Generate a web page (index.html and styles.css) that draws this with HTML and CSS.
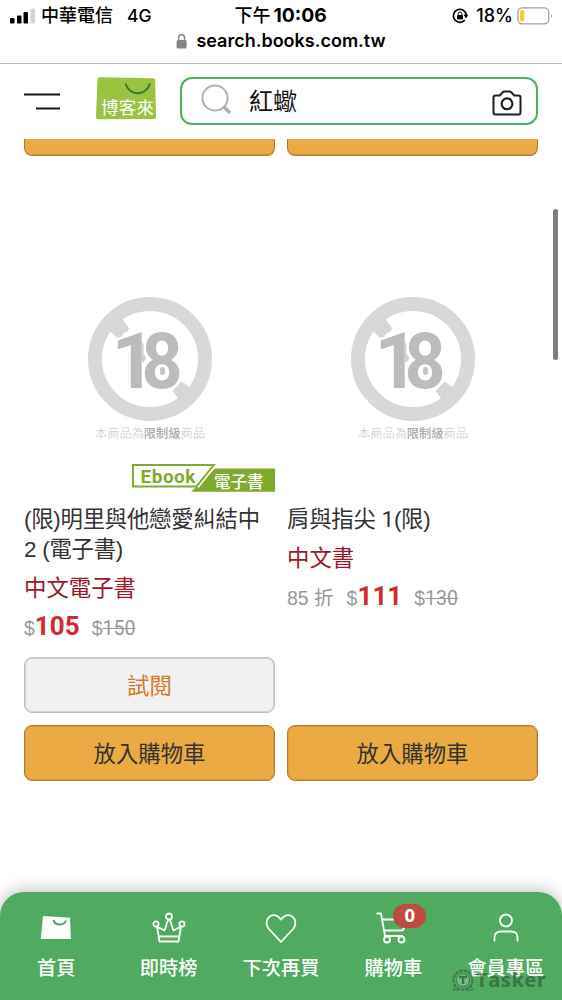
FILE: index.html
```html
<!DOCTYPE html>
<html lang="zh-Hant">
<head>
<meta charset="utf-8">
<meta name="viewport" content="width=device-width">
<title>search.books.com.tw</title>
<link rel="stylesheet" href="styles.css">
</head>
<body>
<svg class="defs" width="0" height="0">
  <symbol id="restricted" viewBox="0 0 150 160">
    <circle cx="70" cy="74" r="55" fill="none" stroke="#d8d8d8" stroke-width="14"/>
    <path d="m29 45 12-13 8 11-1 3-4 2-4 5-3 0zM92.500 106l9-9.500 10 7-11 13z" fill="#d6d6d6"/>
    <text class="restricted-num" transform="translate(31.500 103) scale(1 1)">1</text>
    <text class="restricted-num" transform="translate(61.500 103) scale(.93 1)">8</text>
    <path d="m61 56 2.500 3v10l3 4-3.500 5-2-4z" fill="#d0d0d0"/>
    <rect x="80" y="82" width="5" height="8" rx="2" fill="#c6c6c6"/>
    <text class="restricted-note" x="15" y="152.500" textLength="110">本商品為<tspan fill="#aaa" font-weight="500">限制級</tspan>商品</text>
  </symbol>
</svg>

<div class="status">
  <div class="status-row">
    <div class="carrier">
      <svg width="26" height="16" viewBox="0 0 26 16"><rect x="0" y="10" width="4.500" height="5.500" rx="1.200"/><rect x="7" y="7.500" width="4.500" height="8" rx="1.200"/><rect x="13.500" y="4" width="4.500" height="11.500" rx="1.200"/><rect x="20.500" y=".5" width="4.500" height="15" rx="1.200" fill="#d2d2d2"/></svg>
      <span>中華電信</span><span class="network">4G</span>
    </div>
    <div class="clock">下午<b>10:06</b></div>
    <div class="battery">
      <svg width="17" height="16" viewBox="0 0 17 16"><path d="M12.800 12A6.500 6.500 0 1 1 14.300 7" fill="none" stroke="#000" stroke-width="1.700"/><path d="m11.500 6.500 5 .3-2.600 3.700z"/><rect x="5" y="7" width="6" height="4.500" rx=".7"/><path d="M6.200 7V5.700a1.800 1.800 0 0 1 3.600 0V7" fill="none" stroke="#000"/></svg>
      <span>18%</span>
      <svg width="37" height="18" viewBox="0 0 37 18"><rect x=".8" y=".8" width="31" height="16" rx="4.500" fill="#fff" stroke="#a2a2a2" stroke-width="1.300"/><rect x="3" y="3" width="4.300" height="11.500" rx="1.800" fill="#f6cd38"/><path d="M34 6.500q2 2.300 0 4.600z" fill="#a2a2a2"/></svg>
    </div>
  </div>
  <div class="address">
    <svg width="12" height="15" viewBox="0 0 12 15"><rect x=".6" y="6" width="10" height="8.500" rx="1.500" fill="#858585"/><path d="M2.700 7V3.700a2.900 2.900 0 0 1 5.800 0V7" fill="none" stroke="#858585" stroke-width="1.400"/></svg>
    <span>search.books.com.tw</span>
  </div>
</div>

<header class="header">
  <svg class="menu" width="36" height="17" viewBox="0 0 36 17"><path d="M0 1.500h36M12 15.500h24" stroke="#161616" stroke-width="2"/></svg>
  <svg class="logo" width="60" height="43" viewBox="0 0 60 43"><path d="M3.500.2 57 1.200q2 0 2.200 2L60 40q0 2-2 2L2 42.300q-2 0-2-2L1.500 2Q1.600.2 3.500.2z" fill="#9ac341"/><path d="M29.500 6.500c3.500 13 21 13 24.500 0" fill="none" stroke="#277c35" stroke-width="1.900"/><text class="logo-text" x="5" y="37.300" textLength="53">博客來</text></svg>
  <div class="search">
    <svg width="32" height="32" viewBox="0 0 32 32"><circle cx="14" cy="14" r="12.600" fill="none" stroke="#b0b0b0" stroke-width="2"/><path d="m22.500 22.500 6.500 6.500" stroke="#b0b0b0" stroke-width="3.300"/></svg>
    <span class="query">紅蠍</span>
    <svg width="30" height="26" viewBox="0 0 30 26"><path d="M3.500 5.500h4.200l2.800-3q.8-.9 2-.9h5q1.200 0 2 .9l2.800 3h4.200q2 0 2 2v15q0 2-2 2h-23q-2 0-2-2v-15q0-2 2-2z" fill="none" stroke="#202020" stroke-width="2"/><circle cx="15" cy="13.800" r="5.400" fill="none" stroke="#202020" stroke-width="2.200"/></svg>
  </div>
</header>

<main class="results">
  <div class="previous"><div class="button-end"></div><div class="button-end"></div></div>
  <div class="products">
    <article class="card">
      <svg class="cover" width="150" height="160"><use href="#restricted"/></svg>
      <svg class="ebook" width="143" height="28" viewBox="0 0 143 28"><path d="M83 4.500H143V27.700H59z" fill="#80aa2d"/><path d="M1 1h81L64.500 22.500H1z" fill="#fff" stroke="#80aa2d" stroke-width="2"/><path d="m84 1-18 22.500" stroke="#fff" stroke-width="1.500"/><text class="ebook-en" x="8.500" y="18.500" textLength="55">Ebook</text><text class="ebook-zh" x="82" y="23.500" textLength="49.500">電子書</text></svg>
      <h2 class="title">(限)明里與他戀愛糾結中<br>2 (電子書)</h2>
      <p class="kind">中文電子書</p>
      <p class="price"><span>$</span><strong>105</strong><span class="old">$<s>150</s></span></p>
      <div class="actions"><a class="button preview">試閱</a><a class="button buy">放入購物車</a></div>
    </article>
    <article class="card">
      <svg class="cover" width="150" height="160"><use href="#restricted"/></svg>
      <div class="ebook-space"></div>
      <h2 class="title">肩與指尖 <span class="volume">1</span>(限)</h2>
      <p class="kind">中文書</p>
      <p class="price"><span class="discount">85 折</span><span>$</span><strong>111</strong><span class="old">$<s>130</s></span></p>
      <div class="actions"><a class="button buy">放入購物車</a></div>
    </article>
  </div>
</main>
<div class="scrollbar"></div>

<nav class="nav">
  <a><svg width="36" height="34" viewBox="0 0 36 34"><path d="m5 7 27 1.700.9 21.300H2.800z" fill="#fff"/><path d="M15.500 11c1.500 6 10.500 6 12.500.5" fill="none" stroke="#50aa5f" stroke-width="2"/></svg><span>首頁</span></a>
  <a><svg class="line" width="36" height="34" viewBox="0 0 36 34"><path d="M17.200 10.500l-3.700 11-7.500-4 2.500 15H27.500l2.500-15-7.500 4-3.700-11M8 27.500h20"/><circle cx="18" cy="7.500" r="3"/><circle cx="5" cy="15" r="2.600"/><circle cx="31" cy="15" r="2.600"/></svg><span>即時榜</span></a>
  <a><svg class="line" width="36" height="34" viewBox="0 0 36 34"><path d="M18 33 5.500 19.500C2.500 16 3.200 10.500 6.500 7.600c3.800-3 9-1.400 11.500 3 2.500-4.400 7.700-6 11.500-3 3.300 2.900 4 8.400 1 11.900z"/></svg><span>下次再買</span></a>
  <a><svg class="line" width="36" height="34" viewBox="0 0 36 34"><path d="M1.500 4.500h4.500L10 27h18M7.500 10.500h22.500l-1.300 9q-.3 2-2.200 2H9.500"/><circle cx="12" cy="30.500" r="3"/><circle cx="26.500" cy="30.500" r="3"/></svg><span>購物車</span><b class="badge">0</b></a>
  <a><svg class="line" width="36" height="34" viewBox="0 0 36 34"><circle cx="18" cy="11.500" r="6"/><path d="M6.500 32.500v-4q0-6 6.500-6h10q6.500 0 6.500 6v4"/></svg><span>會員專區</span></a>
  <div class="watermark">
    <svg width="22" height="24" viewBox="0 0 22 24"><circle cx="11" cy="12" r="9.500" fill="none" stroke="#2f4e36" stroke-width="2" stroke-dasharray="3.500 1"/><circle cx="11" cy="12" r="6.500" fill="#9acba2" stroke="#2f4e36"/><path d="M7 9h8M11 9v7" stroke="#2f4e36" stroke-width="2.500"/><path d="m3 18-2 4h6M19 18l2 4h-6" stroke="#2f4e36" fill="none"/></svg>
    <span>Tasker</span>
  </div>
</nav>
</body>
</html>
```
FILE: styles.css
```css
* { box-sizing: border-box; }

body {
  position: relative;
  display: flex;
  flex-direction: column;
  width: 562px;
  height: 1000px;
  margin: 0;
  overflow: hidden;
  background: #fff;
  color: #333;
  font-family: "Liberation Sans", "Noto Sans CJK TC", sans-serif;
}

svg { display: block; flex: none; overflow: visible; }
.defs { position: absolute; }
h2, p { margin: 0; font-weight: 400; }

/* Phone status bar and address */
.status {
  flex: none;
  height: 64px;
  padding-top: 4px;
  border-bottom: 1px solid #bcbcbc;
  color: #000;
  font-family: Inter, "Noto Sans CJK TC", sans-serif;
  font-weight: 500;
  white-space: nowrap;
}
.status-row {
  display: grid;
  grid-template-columns: 1fr 92px 1fr;
  height: 23px;
  padding: 0 8px 0 9px;
  font-size: 18px;
  line-height: 23px;
}
.carrier { display: flex; align-items: center; }
.carrier svg { margin: 0 5px 0 1px; }
.network { margin-left: 14px; font-size: 17.5px; }
.clock { margin-left: -1px; font-size: 18px; }
.clock b { margin-left: 3px; font-weight: 700; font-size: 19.3px; }
.battery { display: flex; align-items: center; justify-content: flex-end; }
.battery span { margin: 0 4px 0 7px; font-size: 18px; }
.address {
  display: flex;
  align-items: center;
  justify-content: center;
  gap: 8px;
  height: 28px;
  font-size: 18px;
  font-weight: 600;
  line-height: 28px;
}

/* Site header */
.header {
  display: flex;
  flex: none;
  height: 75px;
  padding: 13px 24px 0;
}
.menu { margin: 16px 36px 0 0; }
.logo { margin-right: 24px; }
.logo-text { fill: #fff; font: 400 17.5px "Noto Sans CJK TC", sans-serif; }
.search {
  display: flex;
  align-items: center;
  flex: 1;
  height: 48px;
  padding: 0 14px 0 19px;
  border: 2px solid #4eb25c;
  border-radius: 12px;
}
.search svg:first-child { margin-top: -2px; }
.query {
  flex: 1;
  margin: 2px 0 0 16px;
  color: #111;
  font-size: 24px;
  line-height: 44px;
}
.search svg:last-child { margin-top: 3px; }

/* Product list */
.results { flex: 1; min-height: 0; }
.previous, .products {
  display: grid;
  grid-template-columns: 251px 251px;
  column-gap: 12px;
  padding: 0 24px;
}
.button-end {
  height: 17px;
  border: 1px solid #ac7c30;
  border-top: 0;
  border-radius: 0 0 8px 8px;
  background: #ebaa43;
  box-shadow: inset 0 -1px #cf963c;
}
.products { height: 625px; }
.card { display: flex; flex-direction: column; padding-top: 129px; }
.cover { margin-left: 56px; }
.restricted-num {
  fill: #bcbcbc;
  stroke: #fff;
  stroke-width: 5px;
  paint-order: stroke;
  font: 700 77px Roboto, sans-serif;
}
.restricted-note { fill: #c6c6c6; font: 300 12.3px "Noto Sans CJK TC", sans-serif; }
.ebook { margin: 19px 0 13px 108px; }
.ebook-space { height: 60px; flex: none; }
.ebook-en { fill: #80aa2d; font: 700 19px Roboto, sans-serif; }
.ebook-zh { fill: #fff; font: 500 16.5px "Noto Sans CJK TC", sans-serif; }
.title { font-size: 22.4px; line-height: 30px; letter-spacing: -.25px; white-space: nowrap; }
.volume { font-family: Roboto, sans-serif; line-height: 1; }
.kind { margin-top: 9px; color: #981b2b; font-size: 22.4px; line-height: 30px; }
.price {
  display: flex;
  align-items: baseline;
  margin-top: 7px;
  color: #999;
  font-size: 19.5px;
  line-height: 30px;
}
.price strong { color: #d5282b; font: 700 26px/30px Roboto, sans-serif; }
.price s { font-family: Roboto, sans-serif; line-height: 1; }
.old { margin-left: 12px; }
.discount { margin-right: 13px; }
.actions { display: grid; gap: 12px; margin-top: auto; }
.button {
  height: 56px;
  padding-top: 2px;
  border: 1px solid #ac7c30;
  border-radius: 8px;
  font-size: 22.4px;
  line-height: 54px;
  text-align: center;
}
.buy { background: #ebaa43; box-shadow: inset 0 0 0 1px #d99d3e; color: #333; }
.preview {
  border-color: #c0c0c0;
  background: #f1f1f1;
  box-shadow: inset 0 0 0 1px #d0d0d0;
  color: #d17a29;
}
.scrollbar {
  position: absolute;
  top: 209px;
  left: 553px;
  width: 5px;
  height: 151px;
  border-radius: 3px;
  background: #7e7e7e;
}

/* Bottom navigation */
.nav {
  position: relative;
  display: grid;
  grid-template-columns: repeat(5, 1fr);
  flex: none;
  height: 108px;
  padding-top: 17px;
  border-radius: 24px 24px 0 0;
  background: #50aa5f;
  box-shadow: 0 0 18px rgba(0, 0, 0, .3);
  color: #fff;
}
.nav a { position: relative; display: flex; flex-direction: column; align-items: center; }
.nav a span {
  margin-top: 9px;
  font: 500 19.2px/30px "Noto Sans CJK TC", sans-serif;
  white-space: nowrap;
}
.line { fill: none; stroke: #fff; stroke-width: 1.8; stroke-linejoin: round; }
.badge {
  position: absolute;
  top: -5px;
  left: 56px;
  width: 33px;
  height: 24px;
  border-radius: 12px;
  background: #bf4a40;
  font: 700 18.5px/22px "Noto Sans", sans-serif;
  text-align: center;
}
.watermark {
  position: absolute;
  top: 76px;
  left: 452px;
  display: flex;
  align-items: center;
  gap: 2px;
  opacity: .55;
  color: #254c2d;
  font: 700 20px/24px "Open Sans", sans-serif;
  letter-spacing: .6px;
}
```
